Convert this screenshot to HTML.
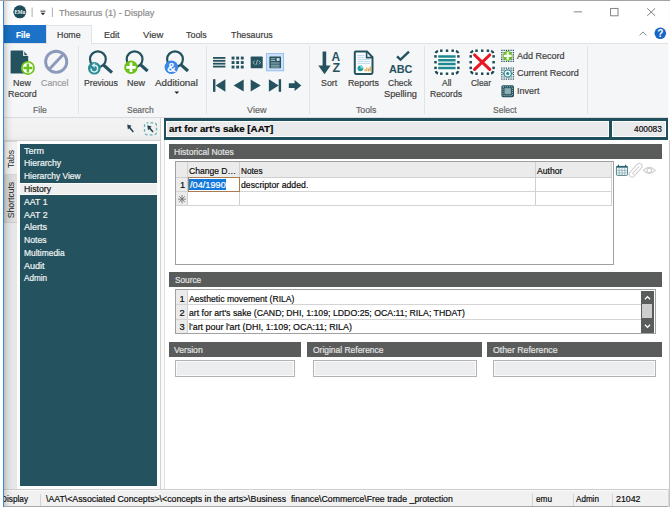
<!DOCTYPE html>
<html><head><meta charset="utf-8"><title>Thesaurus (1) - Display</title>
<style>
html,body{margin:0;padding:0;}
body{width:670px;height:507px;overflow:hidden;background:#fff;position:relative;font-family:"Liberation Sans",sans-serif;}
.t{position:absolute;white-space:pre;transform-origin:0 50%;-webkit-text-stroke:0.2px currentColor;}
.b{position:absolute;box-sizing:border-box;}
.v{position:absolute;white-space:pre;}
svg{position:absolute;overflow:visible;}
</style></head><body>
<!-- window frame -->
<div class="b" style="left:0;top:0;width:670px;height:1px;background:#a3a3a3"></div>
<!-- ribbon body -->
<div class="b" style="left:4px;top:43px;width:665px;height:75px;background:#f5f6f7;border-top:1px solid #e1e2e3"></div>
<div class="b" style="left:4px;top:117px;width:665px;height:1px;background:#dadbdc"></div>
<!-- File tab -->
<div class="b" style="left:4px;top:25px;width:41.5px;height:18px;background:#1b72c6"></div>
<!-- Home tab -->
<div class="b" style="left:45.5px;top:25px;width:46.5px;height:19px;background:#f5f6f7;border:1px solid #e1e2e3;border-bottom:none"></div>
<!-- ribbon separators -->
<div class="b" style="left:77.5px;top:46px;width:1px;height:68px;background:#e2e3e4"></div>
<div class="b" style="left:205.5px;top:46px;width:1px;height:68px;background:#e2e3e4"></div>
<div class="b" style="left:309px;top:46px;width:1px;height:68px;background:#e2e3e4"></div>
<div class="b" style="left:424.3px;top:46px;width:1px;height:68px;background:#e2e3e4"></div>
<div class="b" style="left:587.3px;top:46px;width:1px;height:68px;background:#e2e3e4"></div>

<!-- toolbar / summary band -->
<div class="b" style="left:4px;top:118px;width:156px;height:22px;background:linear-gradient(#f3f3f3,#f0f0f0 80%,#e9e9e9)"></div>
<div class="b" style="left:4px;top:140px;width:156px;height:1px;background:#d0d0d0"></div>
<div class="b" style="left:160px;top:118px;width:1.4px;height:372px;background:#d2d2d2"></div>
<div class="b" style="left:161.4px;top:118px;width:2.6px;height:372px;background:#fbfbfb"></div>
<div class="b" style="left:163.5px;top:140px;width:0.6px;height:350px;background:#e2e2e2"></div>
<!-- teal band -->
<div class="b" style="left:164px;top:118.3px;width:504px;height:21.4px;background:#1f4f5c"></div>
<div class="b" style="left:165.6px;top:121.2px;width:443.4px;height:15.8px;background:#e9eaeb;border:1.4px solid #fff"></div>
<div class="b" style="left:611.8px;top:121.2px;width:53.8px;height:15.8px;background:#e9eaeb;border:1.4px solid #fff"></div>

<!-- left tab strip -->
<div class="b" style="left:4px;top:141px;width:13px;height:348px;background:#e6e7e8"></div>
<div class="b" style="left:4px;top:141px;width:13px;height:34px;background:#f1f1f1;border:1px solid #d6d6d6;border-right:none"></div>
<div class="b" style="left:4px;top:175px;width:13px;height:47.5px;background:linear-gradient(90deg,#d6d6d6,#e0e0e0);border:1px solid #cdcdcd;border-right:none;border-top:none"></div>
<div class="b" style="left:17px;top:141px;width:143px;height:348px;background:#fdfdfd"></div>
<!-- teal nav -->
<div class="b" style="left:20px;top:143.8px;width:137.2px;height:342.2px;background:#25525f"></div>
<div class="b" style="left:20px;top:183px;width:137.2px;height:12px;background:#eeeeee;border-top:1px solid #fbfbfb;border-bottom:1px solid #fbfbfb"></div>

<!-- section headers -->
<div class="b" style="left:169px;top:144px;width:493px;height:14.8px;background:#5a5c5b"></div>
<div class="b" style="left:169px;top:272px;width:493px;height:14.7px;background:#5a5c5b"></div>
<div class="b" style="left:169px;top:342px;width:131.7px;height:14.6px;background:#5a5c5b"></div>
<div class="b" style="left:306.6px;top:342px;width:175.3px;height:14.6px;background:#5a5c5b"></div>
<div class="b" style="left:486.8px;top:342px;width:175.2px;height:14.6px;background:#5a5c5b"></div>

<!-- Historical Notes grid -->
<div class="b" style="left:175px;top:161.4px;width:438.8px;height:103.2px;background:#fff;border:1px solid #a0a0a0"></div>
<div class="b" style="left:176px;top:162.4px;width:436px;height:14.6px;background:#ebebeb"></div>
<div class="b" style="left:176px;top:162.4px;width:11.4px;height:43px;background:#ebebeb"></div>
<div class="b" style="left:176px;top:176.8px;width:436px;height:1px;background:#cfcfcf"></div>
<div class="b" style="left:176px;top:191.1px;width:436px;height:1px;background:#d4d4d4"></div>
<div class="b" style="left:176px;top:205px;width:436px;height:1px;background:#d4d4d4"></div>
<div class="b" style="left:187.3px;top:162.4px;width:1px;height:43px;background:#d0d0d0"></div>
<div class="b" style="left:239.2px;top:162.4px;width:1px;height:43px;background:#d0d0d0"></div>
<div class="b" style="left:535px;top:162.4px;width:1px;height:43px;background:#d0d0d0"></div>
<div class="b" style="left:611.4px;top:162.4px;width:1px;height:43px;background:#d0d0d0"></div>
<!-- editing cell -->
<div class="b" style="left:187.6px;top:177.2px;width:52px;height:14.4px;background:#fff;border:1px solid #a87c52"></div>
<div class="b" style="left:189.2px;top:178.8px;width:37px;height:11px;background:#1279dc"></div>
<!-- star -->
<svg style="left:177.8px;top:194.8px" width="8" height="8.3" viewBox="0 0 7 7.4"><g stroke="#6a6a6a" stroke-width="0.75" fill="none"><path d="M3.5 0V7.4M0 3.7H7M1 1.1L6 6.3M6 1.1L1 6.3"/></g></svg>

<!-- Source grid -->
<div class="b" style="left:175px;top:289.4px;width:480.6px;height:45px;background:#fff;border:1px solid #a0a0a0"></div>
<div class="b" style="left:176px;top:290.4px;width:11.4px;height:43px;background:#ebebeb"></div>
<div class="b" style="left:187.3px;top:290.4px;width:1px;height:43px;background:#d0d0d0"></div>
<div class="b" style="left:176px;top:304.4px;width:464.5px;height:1px;background:#d4d4d4"></div>
<div class="b" style="left:176px;top:318.8px;width:464.5px;height:1px;background:#d4d4d4"></div>
<!-- scrollbar -->
<div class="b" style="left:640.6px;top:291px;width:13px;height:41.8px;background:#5a5c5b"></div>
<div class="b" style="left:642.2px;top:304px;width:9.9px;height:13.8px;background:#cdcdcd"></div>
<svg style="left:640.6px;top:291px" width="13" height="42" viewBox="0 0 13 42"><g stroke="#fff" stroke-width="1.3" fill="none"><path d="M4 8.2L6.5 5.6L9 8.2"/><path d="M4 33.8L6.5 36.4L9 33.8"/></g></svg>

<!-- fields -->
<div class="b" style="left:175px;top:359.6px;width:120.2px;height:17px;background:#ecedee;border:1px solid #b2b2b2;box-shadow:inset 0 0 0 1px #fbfbfb"></div>
<div class="b" style="left:312.6px;top:359.6px;width:164.6px;height:17px;background:#ecedee;border:1px solid #b2b2b2;box-shadow:inset 0 0 0 1px #fbfbfb"></div>
<div class="b" style="left:493px;top:359.6px;width:162.6px;height:17px;background:#ecedee;border:1px solid #b2b2b2;box-shadow:inset 0 0 0 1px #fbfbfb"></div>

<!-- status bar -->
<div class="b" style="left:4px;top:489px;width:665px;height:17px;background:#f1f1f1;border-top:1px solid #cdcdcd;box-shadow:inset 0 1px 0 #fafafa"></div>
<div class="b" style="left:4px;top:506px;width:666px;height:1px;background:#a8a8a8"></div>
<div class="b" style="left:39.6px;top:493.5px;width:1px;height:12px;background:#d2d2d2"></div>
<div class="b" style="left:532.3px;top:493.5px;width:1px;height:12px;background:#d2d2d2"></div>
<div class="b" style="left:572.6px;top:493.5px;width:1px;height:12px;background:#d2d2d2"></div>
<div class="b" style="left:612.2px;top:493.5px;width:1px;height:12px;background:#d2d2d2"></div>
<!-- right edge -->
<div class="b" style="left:668px;top:1px;width:2px;height:506px;background:#fdfdfd"></div>
<div class="b" style="left:669px;top:140px;width:1px;height:367px;background:#c6c6c6"></div>
<div class="b" style="left:668px;top:489px;width:1px;height:18px;background:#d8d8d8"></div>
<!-- ===== ICONS ===== -->
<svg style="left:0;top:0" width="670" height="507" viewBox="0 0 670 507">
<!-- logo -->
<circle cx="19.8" cy="11.8" r="6.5" fill="#1e4c58"/>
<text x="19.8" y="14.2" font-family="Liberation Serif" font-weight="bold" font-size="7" fill="#fff" text-anchor="middle" textLength="10.8" lengthAdjust="spacingAndGlyphs">EMu</text>
<!-- QAT -->
<rect x="31.7" y="7.6" width="0.8" height="9.4" fill="#9a9a9a"/>
<rect x="51.9" y="7.6" width="0.8" height="9.4" fill="#9a9a9a"/>
<rect x="40.4" y="10.7" width="5" height="0.9" fill="#2a2a2a"/>
<path d="M40.6 12.7h4.6l-2.3 2.6z" fill="#2a2a2a"/>
<!-- window controls -->
<rect x="573.8" y="11.4" width="8.2" height="0.9" fill="#777"/>
<rect x="610.6" y="8.4" width="7.4" height="7.4" fill="none" stroke="#777" stroke-width="0.9"/>
<path d="M647.2 8.3l8 7.6M655.2 8.3l-8 7.6" stroke="#777" stroke-width="0.9" fill="none"/>
<path d="M639.6 35.4l3.4-3.5l3.4 3.5" stroke="#888" stroke-width="1" fill="none"/>
<circle cx="660.3" cy="33.3" r="5.8" fill="#1767c8"/>
<text x="660.4" y="36.9" font-family="Liberation Sans" font-weight="bold" font-size="10" fill="#fff" text-anchor="middle">?</text>

<!-- New Record -->
<path d="M11.7 50.4H23.4L28.2 55.8V72.4Q28.2 73.6 27 73.6H11.7Q10.6 73.6 10.6 72.4V51.5Q10.6 50.4 11.7 50.4Z" fill="#25525f"/>
<path d="M23.2 50.2V56H28.4V55.4L23.8 50.2Z" fill="#fff"/>
<path d="M24.3 51.6L27.5 55.2H24.3Z" fill="#25525f"/>
<circle cx="27.9" cy="67.9" r="7" fill="#6cc21b"/>
<circle cx="27.9" cy="67.9" r="5.3" fill="#fff"/>
<path d="M27.9 63.4V72.4M23.4 67.9H32.4" stroke="#6cc21b" stroke-width="2.5"/>
<!-- Cancel -->
<circle cx="56.2" cy="61.8" r="10.6" fill="none" stroke="#8b99bb" stroke-width="2.9"/>
<path d="M49 69.4L63.4 54.2" stroke="#8b99bb" stroke-width="2.9"/>

<!-- Previous -->
<circle cx="97.9" cy="59.2" r="7.9" fill="none" stroke="#25525f" stroke-width="2.2"/>
<path d="M103.8 65.2L112 72.6" stroke="#25525f" stroke-width="3.2"/>
<circle cx="94.3" cy="68.2" r="6.3" fill="#2c8d96"/>
<path d="M91 68.6a3.3 3.3 0 1 0 3.3-3.3" stroke="#d8eef0" stroke-width="1.5" fill="none"/>
<path d="M94.8 62.8L91.6 65.4L94.8 67.8Z" fill="#d8eef0"/>
<!-- New search -->
<circle cx="134.6" cy="59.2" r="7.9" fill="none" stroke="#25525f" stroke-width="2.2"/>
<path d="M140.4 64.6L147.6 71" stroke="#25525f" stroke-width="3.2"/>
<circle cx="131" cy="67.3" r="6.8" fill="#6cc21b"/>
<path d="M131 62.6V72M126.3 67.3H135.7" stroke="#fff" stroke-width="2.7"/>
<!-- Additional -->
<circle cx="175" cy="59.2" r="7.9" fill="none" stroke="#25525f" stroke-width="2.2"/>
<path d="M180.8 64.6L188 71" stroke="#25525f" stroke-width="3.2"/>
<circle cx="171.4" cy="67.3" r="6.8" fill="#3d86e6"/>
<text x="171.5" y="71.6" font-family="Liberation Sans" font-weight="bold" font-size="12.4" fill="#fff" text-anchor="middle">&amp;</text>
<path d="M174.4 91.6h4.8l-2.4 2.5z" fill="#222"/>

<!-- View icons row 1 -->
<g fill="#25525f">
<rect x="213" y="57" width="12.4" height="1.8"/><rect x="213" y="59.9" width="12.4" height="1.8"/><rect x="213" y="62.8" width="12.4" height="1.8"/><rect x="213" y="65.7" width="12.4" height="1.8"/>
<rect x="231.6" y="56.6" width="2.9" height="2.9"/><rect x="236.2" y="56.6" width="2.9" height="2.9"/><rect x="240.8" y="56.6" width="2.9" height="2.9"/>
<rect x="231.6" y="61.1" width="2.9" height="2.9"/><rect x="236.2" y="61.1" width="2.9" height="2.9"/><rect x="240.8" y="61.1" width="2.9" height="2.9"/>
<rect x="231.6" y="65.6" width="2.9" height="2.9"/><rect x="236.2" y="65.6" width="2.9" height="2.9"/><rect x="240.8" y="65.6" width="2.9" height="2.9"/>
<rect x="250.7" y="56.6" width="12" height="11.6" rx="0.6"/>
</g>
<path d="M254.8 60.6L252.8 62.5L254.8 64.4M258.7 60.6L260.7 62.5L258.7 64.4M257.6 59.8L255.9 65.2" stroke="#b9d3d8" stroke-width="0.8" fill="none"/>
<rect x="266.4" y="53.6" width="17.2" height="17.2" fill="#cde2fa" stroke="#8fbaf0" stroke-width="0.9"/>
<rect x="269.4" y="56.6" width="11.6" height="11.6" rx="0.6" fill="#25525f"/>
<path d="M270.8 58.8H275.2M270.8 60.6H275.2M270.8 63H279.6M270.8 65.2H279.6M270.8 67H279.6" stroke="#c4dbe0" stroke-width="0.8"/>
<rect x="276.6" y="58.1" width="3" height="2.8" fill="#c4dbe0"/>
<!-- nav row -->
<g fill="#25525f">
<rect x="213" y="79.2" width="2.4" height="12.6"/><path d="M225.4 79.2V91.8L215.6 85.5Z"/>
<path d="M243.7 79.6V91.4L233.6 85.5Z"/>
<path d="M250.7 79.6V91.4L260.8 85.5Z"/>
<path d="M268.9 79.2V91.8L278.7 85.5Z"/><rect x="278.7" y="79.2" width="2.4" height="12.6"/>
<path d="M288.8 83.3H294.6V80.1L301.3 85.6L294.6 91.1V87.9H288.8Z"/>
</g>

<!-- Sort -->
<g fill="#25525f">
<rect x="322.6" y="51.5" width="3.6" height="16"/>
<path d="M318.3 65.6H330.7L324.5 74.2Z"/>
</g>
<text x="335.9" y="60.7" font-family="Liberation Sans" font-weight="bold" font-size="12.8" fill="#25525f" text-anchor="middle" textLength="8.6" lengthAdjust="spacingAndGlyphs">A</text>
<text x="336.2" y="71.7" font-family="Liberation Sans" font-weight="bold" font-size="12" fill="#25525f" text-anchor="middle" textLength="7.6" lengthAdjust="spacingAndGlyphs">Z</text>
<!-- Reports -->
<path d="M356 51.4H367L372.5 57.2V72.6Q372.5 73.9 371.2 73.9H356Q354.8 73.9 354.8 72.6V52.6Q354.8 51.4 356 51.4Z" fill="#fbfdfe" stroke="#25525f" stroke-width="2"/>
<path d="M366.6 51.6V57.6H372.4" fill="none" stroke="#25525f" stroke-width="1.6"/>
<path d="M357.4 55.4H364.6M357.4 57.4H364.6M357.4 59.4H370M357.4 61.4H370M357.4 63.4H370" stroke="#bcd9ee" stroke-width="1"/>
<circle cx="360.4" cy="68.3" r="2.9" fill="#21a0a0"/>
<path d="M360.4 68.3V65.4A2.9 2.9 0 0 1 363.3 68.3Z" fill="#8fd6d6"/>
<path d="M365 71.2V69M366.8 71.2V67.4M368.6 71.2V68.4M370.2 71.2V66.4" stroke="#e6a23a" stroke-width="1.2"/>
<!-- Check spelling -->
<path d="M397 56.4L400.5 59.7L409 51.6" stroke="#25525f" stroke-width="2.4" fill="none"/>
<text x="400.7" y="72.9" font-family="Liberation Sans" font-weight="bold" font-size="11.4" fill="#25525f" text-anchor="middle" textLength="23.6" lengthAdjust="spacingAndGlyphs">ABC</text>

<!-- All Records -->
<rect x="433.9" y="49.1" width="26.4" height="26.2" rx="4.4" fill="#fdfefe"/>
<g fill="#1f4c58">
<rect x="440.05" y="49.45" width="2.5" height="2.5"/>
<rect x="440.05" y="72.45" width="2.5" height="2.5"/>
<rect x="434.25" y="55.15" width="2.5" height="2.5"/>
<rect x="457.15" y="55.15" width="2.5" height="2.5"/>
<rect x="445.75" y="49.45" width="2.5" height="2.5"/>
<rect x="445.75" y="72.45" width="2.5" height="2.5"/>
<rect x="434.25" y="60.95" width="2.5" height="2.5"/>
<rect x="457.15" y="60.95" width="2.5" height="2.5"/>
<rect x="451.45" y="49.45" width="2.5" height="2.5"/>
<rect x="451.45" y="72.45" width="2.5" height="2.5"/>
<rect x="434.25" y="66.65" width="2.5" height="2.5"/>
<rect x="457.15" y="66.65" width="2.5" height="2.5"/>
</g>
<path d="M435.68 53.19A3.6 3.6 0 0 1 437.99 50.88 M455.91 50.88A3.6 3.6 0 0 1 458.22 53.19 M458.22 71.21A3.6 3.6 0 0 1 455.91 73.52 M437.99 73.52A3.6 3.6 0 0 1 435.68 71.21" fill="none" stroke="#1f4c58" stroke-width="2.5"/>
<path d="M438.2 56.4H455.6M438.2 60.2H455.6M438.2 64H455.6M438.2 67.9H455.6" stroke="#1d8790" stroke-width="2.5"/>
<!-- Clear -->
<rect x="469.1" y="49.1" width="26.4" height="26.2" rx="4.4" fill="#fdfefe"/>
<g fill="#1f4c58">
<rect x="475.25" y="49.45" width="2.5" height="2.5"/>
<rect x="475.25" y="72.45" width="2.5" height="2.5"/>
<rect x="469.45" y="55.15" width="2.5" height="2.5"/>
<rect x="492.35" y="55.15" width="2.5" height="2.5"/>
<rect x="480.95" y="49.45" width="2.5" height="2.5"/>
<rect x="480.95" y="72.45" width="2.5" height="2.5"/>
<rect x="469.45" y="60.95" width="2.5" height="2.5"/>
<rect x="492.35" y="60.95" width="2.5" height="2.5"/>
<rect x="486.65" y="49.45" width="2.5" height="2.5"/>
<rect x="486.65" y="72.45" width="2.5" height="2.5"/>
<rect x="469.45" y="66.65" width="2.5" height="2.5"/>
<rect x="492.35" y="66.65" width="2.5" height="2.5"/>
</g>
<path d="M470.88 53.19A3.6 3.6 0 0 1 473.19 50.88 M491.11 50.88A3.6 3.6 0 0 1 493.42 53.19 M493.42 71.21A3.6 3.6 0 0 1 491.11 73.52 M473.19 73.52A3.6 3.6 0 0 1 470.88 71.21" fill="none" stroke="#1f4c58" stroke-width="2.5"/>
<path d="M474.6 55L489.7 69.4M489.7 55L474.6 69.4" stroke="#e81822" stroke-width="3.1" stroke-linecap="round"/>
<!-- Add Record -->
<path d="M501.20 49.80h1.3v1.3h-1.3zM503.50 49.80h1.3v1.3h-1.3zM505.80 49.80h1.3v1.3h-1.3zM508.10 49.80h1.3v1.3h-1.3zM510.40 49.80h1.3v1.3h-1.3zM512.70 49.80h1.3v1.3h-1.3zM501.20 52.00h1.3v1.3h-1.3zM503.50 52.00h1.3v1.3h-1.3zM505.80 52.00h1.3v1.3h-1.3zM508.10 52.00h1.3v1.3h-1.3zM510.40 52.00h1.3v1.3h-1.3zM512.70 52.00h1.3v1.3h-1.3zM501.20 54.20h1.3v1.3h-1.3zM503.50 54.20h1.3v1.3h-1.3zM510.40 54.20h1.3v1.3h-1.3zM512.70 54.20h1.3v1.3h-1.3zM501.20 56.40h1.3v1.3h-1.3zM503.50 56.40h1.3v1.3h-1.3zM510.40 56.40h1.3v1.3h-1.3zM512.70 56.40h1.3v1.3h-1.3zM501.20 58.60h1.3v1.3h-1.3zM503.50 58.60h1.3v1.3h-1.3zM505.80 58.60h1.3v1.3h-1.3zM508.10 58.60h1.3v1.3h-1.3zM510.40 58.60h1.3v1.3h-1.3zM512.70 58.60h1.3v1.3h-1.3zM501.20 60.80h1.3v1.3h-1.3zM503.50 60.80h1.3v1.3h-1.3zM505.80 60.80h1.3v1.3h-1.3zM508.10 60.80h1.3v1.3h-1.3zM510.40 60.80h1.3v1.3h-1.3zM512.70 60.80h1.3v1.3h-1.3z" fill="#2a5560"/>
<circle cx="507.7" cy="55.9" r="4.8" fill="#6cc21b"/>
<path d="M507.7 52V59.8M503.8 55.9H511.6" stroke="#fff" stroke-width="2.1"/>
<!-- Current Record -->
<path d="M501.20 67.40h1.3v1.3h-1.3zM503.50 67.40h1.3v1.3h-1.3zM505.80 67.40h1.3v1.3h-1.3zM508.10 67.40h1.3v1.3h-1.3zM510.40 67.40h1.3v1.3h-1.3zM512.70 67.40h1.3v1.3h-1.3zM501.20 69.60h1.3v1.3h-1.3zM503.50 69.60h1.3v1.3h-1.3zM505.80 69.60h1.3v1.3h-1.3zM508.10 69.60h1.3v1.3h-1.3zM510.40 69.60h1.3v1.3h-1.3zM512.70 69.60h1.3v1.3h-1.3zM501.20 71.80h1.3v1.3h-1.3zM503.50 71.80h1.3v1.3h-1.3zM510.40 71.80h1.3v1.3h-1.3zM512.70 71.80h1.3v1.3h-1.3zM501.20 74.00h1.3v1.3h-1.3zM503.50 74.00h1.3v1.3h-1.3zM510.40 74.00h1.3v1.3h-1.3zM512.70 74.00h1.3v1.3h-1.3zM501.20 76.20h1.3v1.3h-1.3zM503.50 76.20h1.3v1.3h-1.3zM505.80 76.20h1.3v1.3h-1.3zM508.10 76.20h1.3v1.3h-1.3zM510.40 76.20h1.3v1.3h-1.3zM512.70 76.20h1.3v1.3h-1.3zM501.20 78.40h1.3v1.3h-1.3zM503.50 78.40h1.3v1.3h-1.3zM505.80 78.40h1.3v1.3h-1.3zM508.10 78.40h1.3v1.3h-1.3zM510.40 78.40h1.3v1.3h-1.3zM512.70 78.40h1.3v1.3h-1.3z" fill="#2a5560"/><circle cx="507.7" cy="73.5" r="4.6" fill="#f5f6f7"/><path d="M502.6 73.5H512.8" stroke="#2c8d96" stroke-width="0.9"/>
<circle cx="507.7" cy="73.5" r="3.7" fill="#f5f6f7" stroke="#2c8d96" stroke-width="1.3"/>
<circle cx="507.7" cy="73.5" r="1.6" fill="#2c8d96"/>
<!-- Invert -->
<rect x="501.4" y="85.2" width="12.6" height="12" rx="1.6" fill="#25525f"/>
<rect x="504.5" y="88.2" width="6.4" height="6" fill="#8fadb3"/>
<rect x="503" y="86.8" width="9.4" height="8.8" fill="none" stroke="#a9c3c8" stroke-width="1" stroke-dasharray="1 1.1"/>

<!-- toolbar icons -->
<path d="M127.2 124.6L131.6 125.8L130.3 127.1L133.9 131.4L132.9 132.5L129.1 128.3L127.9 129.6Z" fill="#1f4552"/>
<rect x="144.5" y="122.8" width="12" height="12" rx="2.4" fill="none" stroke="#62b1b7" stroke-width="1.25" stroke-dasharray="2.7 2.1" stroke-dashoffset="1.2"/>
<path d="M147.3 125.2L151.7 126.4L150.4 127.7L153.6 131.4L152.6 132.5L149.2 128.9L148 130.2Z" fill="#1f4552"/>

<!-- grid side icons -->
<rect x="616.4" y="166.4" width="11.2" height="9" rx="1" fill="#f4f8f9" stroke="#2a6370" stroke-width="0.8"/>
<rect x="616.4" y="166" width="11.2" height="1.7" fill="#2a6370"/>
<path d="M618.4 164.8V167M625.6 164.8V167" stroke="#2a6370" stroke-width="1.2"/>
<path d="M619.2 168V175.4M622 168V175.4M624.8 168V175.4M616.4 170.4H627.6M616.4 172.9H627.6" stroke="#6f9aa3" stroke-width="0.6"/>
<g transform="rotate(-48 635.6 170.3)" fill="none" stroke="#cfcfcf" stroke-width="1"><rect x="627.4" y="167.5" width="16.4" height="5.6" rx="2.8"/><path d="M641 170.3H631.4a1.3 1.3 0 0 0 0 1.5"/></g>
<path d="M643.4 170.4Q649.2 164 655.2 170.4Q649.2 176.6 643.4 170.4Z" fill="none" stroke="#cfcfcf" stroke-width="1.1"/>
<circle cx="649.3" cy="170.4" r="2.3" fill="none" stroke="#cfcfcf" stroke-width="1.1"/>
</svg>
<!-- vertical tab labels -->
<span class="v" style="left:10.9px;top:159.4px;font-size:8.9px;line-height:9px;color:#222;transform:translate(-50%,-50%) rotate(-90deg) scaleX(0.97);transform-origin:50% 50%">Tabs</span>
<span class="v" style="left:10.9px;top:199.6px;font-size:8.9px;line-height:9px;color:#222;transform:translate(-50%,-50%) rotate(-90deg) scaleX(0.97);transform-origin:50% 50%">Shortcuts</span>

<span class="t" style="left:59.10px;top:8.00px;font-size:9.9px;line-height:9.9px;color:#8c8c8c;font-weight:normal;transform:scaleX(0.9296);">Thesaurus (1) - Display</span>
<span class="t" style="left:16.30px;top:30.00px;font-size:9.9px;line-height:9.9px;color:#ffffff;font-weight:bold;transform:scaleX(0.8228);">File</span>
<span class="t" style="left:56.80px;top:30.00px;font-size:9.9px;line-height:9.9px;color:#3c3c3c;font-weight:normal;transform:scaleX(0.8958);">Home</span>
<span class="t" style="left:104.00px;top:30.00px;font-size:9.9px;line-height:9.9px;color:#3c3c3c;font-weight:normal;transform:scaleX(0.9101);">Edit</span>
<span class="t" style="left:143.10px;top:30.00px;font-size:9.9px;line-height:9.9px;color:#3c3c3c;font-weight:normal;transform:scaleX(0.9560);">View</span>
<span class="t" style="left:186.10px;top:30.00px;font-size:9.9px;line-height:9.9px;color:#3c3c3c;font-weight:normal;transform:scaleX(0.9019);">Tools</span>
<span class="t" style="left:230.80px;top:30.00px;font-size:9.9px;line-height:9.9px;color:#3c3c3c;font-weight:normal;transform:scaleX(0.8938);">Thesaurus</span>
<span class="t" style="left:13.40px;top:78.00px;font-size:9.6px;line-height:9.6px;color:#3f3f3f;font-weight:normal;transform:scaleX(0.9321);">New</span>
<span class="t" style="left:7.50px;top:89.00px;font-size:9.6px;line-height:9.6px;color:#3f3f3f;font-weight:normal;transform:scaleX(0.9309);">Record</span>
<span class="t" style="left:41.40px;top:78.00px;font-size:9.6px;line-height:9.6px;color:#9b9b9b;font-weight:normal;transform:scaleX(0.9205);">Cancel</span>
<span class="t" style="left:83.50px;top:78.00px;font-size:9.6px;line-height:9.6px;color:#3f3f3f;font-weight:normal;transform:scaleX(0.9055);">Previous</span>
<span class="t" style="left:127.30px;top:78.00px;font-size:9.6px;line-height:9.6px;color:#3f3f3f;font-weight:normal;transform:scaleX(0.9426);">New</span>
<span class="t" style="left:155.20px;top:78.00px;font-size:9.6px;line-height:9.6px;color:#3f3f3f;font-weight:normal;transform:scaleX(1.0180);">Additional</span>
<span class="t" style="left:320.80px;top:78.00px;font-size:9.6px;line-height:9.6px;color:#3f3f3f;font-weight:normal;transform:scaleX(0.9200);">Sort</span>
<span class="t" style="left:348.10px;top:78.00px;font-size:9.6px;line-height:9.6px;color:#3f3f3f;font-weight:normal;transform:scaleX(0.9198);">Reports</span>
<span class="t" style="left:388.20px;top:78.00px;font-size:9.6px;line-height:9.6px;color:#3f3f3f;font-weight:normal;transform:scaleX(0.8859);">Check</span>
<span class="t" style="left:384.00px;top:89.00px;font-size:9.6px;line-height:9.6px;color:#3f3f3f;font-weight:normal;transform:scaleX(0.9666);">Spelling</span>
<span class="t" style="left:442.10px;top:78.00px;font-size:9.6px;line-height:9.6px;color:#3f3f3f;font-weight:normal;transform:scaleX(0.8902);">All</span>
<span class="t" style="left:430.30px;top:89.00px;font-size:9.6px;line-height:9.6px;color:#3f3f3f;font-weight:normal;transform:scaleX(0.8983);">Records</span>
<span class="t" style="left:471.40px;top:78.00px;font-size:9.6px;line-height:9.6px;color:#3f3f3f;font-weight:normal;transform:scaleX(0.8763);">Clear</span>
<span class="t" style="left:516.50px;top:51.00px;font-size:9.6px;line-height:9.6px;color:#3f3f3f;font-weight:normal;transform:scaleX(0.9394);">Add Record</span>
<span class="t" style="left:516.50px;top:68.00px;font-size:9.6px;line-height:9.6px;color:#3f3f3f;font-weight:normal;transform:scaleX(0.9437);">Current Record</span>
<span class="t" style="left:516.50px;top:86.00px;font-size:9.6px;line-height:9.6px;color:#3f3f3f;font-weight:normal;transform:scaleX(0.9375);">Invert</span>
<span class="t" style="left:32.60px;top:105.00px;font-size:9.6px;line-height:9.6px;color:#666;font-weight:normal;transform:scaleX(0.8921);">File</span>
<span class="t" style="left:127.30px;top:105.00px;font-size:9.6px;line-height:9.6px;color:#666;font-weight:normal;transform:scaleX(0.8814);">Search</span>
<span class="t" style="left:246.50px;top:105.00px;font-size:9.6px;line-height:9.6px;color:#666;font-weight:normal;transform:scaleX(0.9455);">View</span>
<span class="t" style="left:355.60px;top:105.00px;font-size:9.6px;line-height:9.6px;color:#666;font-weight:normal;transform:scaleX(0.9105);">Tools</span>
<span class="t" style="left:493.40px;top:105.00px;font-size:9.6px;line-height:9.6px;color:#666;font-weight:normal;transform:scaleX(0.8848);">Select</span>
<span class="t" style="left:168.80px;top:124.00px;font-size:9.4px;line-height:9.4px;color:#050505;font-weight:bold;transform:scaleX(1.0420);">art for art's sake [AAT]</span>
<span class="t" style="left:634.20px;top:125.00px;font-size:8.8px;line-height:8.8px;color:#0c0c0c;font-weight:normal;transform:scaleX(0.9469);">400083</span>
<span class="t" style="left:23.80px;top:147.00px;font-size:9.3px;line-height:9.3px;color:#f2f6f7;font-weight:normal;transform:scaleX(0.9723);">Term</span>
<span class="t" style="left:23.80px;top:159.00px;font-size:9.3px;line-height:9.3px;color:#f2f6f7;font-weight:normal;transform:scaleX(0.9326);">Hierarchy</span>
<span class="t" style="left:23.80px;top:172.00px;font-size:9.3px;line-height:9.3px;color:#f2f6f7;font-weight:normal;transform:scaleX(0.9076);">Hierarchy View</span>
<span class="t" style="left:23.80px;top:185.00px;font-size:9.3px;line-height:9.3px;color:#111;font-weight:normal;transform:scaleX(0.9365);">History</span>
<span class="t" style="left:23.80px;top:198.00px;font-size:9.3px;line-height:9.3px;color:#f2f6f7;font-weight:normal;transform:scaleX(0.9446);">AAT 1</span>
<span class="t" style="left:23.80px;top:211.00px;font-size:9.3px;line-height:9.3px;color:#f2f6f7;font-weight:normal;transform:scaleX(0.9446);">AAT 2</span>
<span class="t" style="left:23.80px;top:223.00px;font-size:9.3px;line-height:9.3px;color:#f2f6f7;font-weight:normal;transform:scaleX(0.9720);">Alerts</span>
<span class="t" style="left:23.80px;top:236.00px;font-size:9.3px;line-height:9.3px;color:#f2f6f7;font-weight:normal;transform:scaleX(0.9302);">Notes</span>
<span class="t" style="left:23.80px;top:249.00px;font-size:9.3px;line-height:9.3px;color:#f2f6f7;font-weight:normal;transform:scaleX(0.9032);">Multimedia</span>
<span class="t" style="left:23.80px;top:262.00px;font-size:9.3px;line-height:9.3px;color:#f2f6f7;font-weight:normal;transform:scaleX(0.9716);">Audit</span>
<span class="t" style="left:23.80px;top:274.00px;font-size:9.3px;line-height:9.3px;color:#f2f6f7;font-weight:normal;transform:scaleX(0.8763);">Admin</span>
<span class="t" style="left:174.30px;top:148.00px;font-size:9.3px;line-height:9.3px;color:#e4e4e4;font-weight:normal;transform:scaleX(0.9169);">Historical Notes</span>
<span class="t" style="left:174.70px;top:276.00px;font-size:9.3px;line-height:9.3px;color:#e4e4e4;font-weight:normal;transform:scaleX(0.8891);">Source</span>
<span class="t" style="left:174.30px;top:346.00px;font-size:9.3px;line-height:9.3px;color:#e4e4e4;font-weight:normal;transform:scaleX(0.9253);">Version</span>
<span class="t" style="left:312.50px;top:346.00px;font-size:9.3px;line-height:9.3px;color:#e4e4e4;font-weight:normal;transform:scaleX(0.9095);">Original Reference</span>
<span class="t" style="left:492.50px;top:346.00px;font-size:9.3px;line-height:9.3px;color:#e4e4e4;font-weight:normal;transform:scaleX(0.9384);">Other Reference</span>
<span class="t" style="left:189.10px;top:167.00px;font-size:9.3px;line-height:9.3px;color:#0c0c0c;font-weight:normal;transform:scaleX(0.9204);">Change D…</span>
<span class="t" style="left:241.20px;top:167.00px;font-size:9.3px;line-height:9.3px;color:#0c0c0c;font-weight:normal;transform:scaleX(0.8849);">Notes</span>
<span class="t" style="left:537.00px;top:167.00px;font-size:9.3px;line-height:9.3px;color:#0c0c0c;font-weight:normal;transform:scaleX(0.9304);">Author</span>
<span class="t" style="left:180.00px;top:181.00px;font-size:9.3px;line-height:9.3px;color:#0c0c0c;font-weight:normal;transform:scaleX(1.0000);">1</span>
<span class="t" style="left:190.00px;top:181.00px;font-size:9.3px;line-height:9.3px;color:#ffffff;font-weight:normal;transform:scaleX(0.9889);">/04/1990</span>
<span class="t" style="left:241.20px;top:181.00px;font-size:9.3px;line-height:9.3px;color:#0c0c0c;font-weight:normal;transform:scaleX(0.9368);">descriptor added.</span>
<span class="t" style="left:179.50px;top:295.00px;font-size:9.3px;line-height:9.3px;color:#0c0c0c;font-weight:normal;transform:scaleX(1.0000);">1</span>
<span class="t" style="left:179.50px;top:309.00px;font-size:9.3px;line-height:9.3px;color:#0c0c0c;font-weight:normal;transform:scaleX(1.0000);">2</span>
<span class="t" style="left:179.50px;top:323.00px;font-size:9.3px;line-height:9.3px;color:#0c0c0c;font-weight:normal;transform:scaleX(1.0000);">3</span>
<span class="t" style="left:189.00px;top:295.00px;font-size:9.3px;line-height:9.3px;color:#0c0c0c;font-weight:normal;transform:scaleX(0.9281);">Aesthetic movement (RILA)</span>
<span class="t" style="left:189.00px;top:309.00px;font-size:9.3px;line-height:9.3px;color:#0c0c0c;font-weight:normal;transform:scaleX(0.9398);">art for art's sake (CAND; DHI, 1:109; LDDO:25; OCA:11; RILA; THDAT)</span>
<span class="t" style="left:189.00px;top:323.00px;font-size:9.3px;line-height:9.3px;color:#0c0c0c;font-weight:normal;transform:scaleX(0.9602);">l'art pour l'art (DHI, 1:109; OCA:11; RILA)</span>
<span class="t" style="left:1.30px;top:495.00px;font-size:9.3px;line-height:9.3px;color:#0c0c0c;font-weight:normal;transform:scaleX(0.8890);">Display</span>
<span class="t" style="left:45.70px;top:495.00px;font-size:9.3px;line-height:9.3px;color:#0c0c0c;font-weight:normal;transform:scaleX(0.9409);">\AAT\&lt;Associated Concepts&gt;\&lt;concepts in the arts&gt;\Business  finance\Commerce\Free trade _protection</span>
<span class="t" style="left:535.50px;top:495.00px;font-size:9.3px;line-height:9.3px;color:#0c0c0c;font-weight:normal;transform:scaleX(0.8843);">emu</span>
<span class="t" style="left:575.60px;top:495.00px;font-size:9.3px;line-height:9.3px;color:#0c0c0c;font-weight:normal;transform:scaleX(0.8688);">Admin</span>
<span class="t" style="left:615.50px;top:495.00px;font-size:9.3px;line-height:9.3px;color:#0c0c0c;font-weight:normal;transform:scaleX(0.9474);">21042</span>
<div class="b" style="left:4px;top:1px;width:9px;height:505px;background:linear-gradient(90deg,rgba(0,0,0,0.17),rgba(0,0,0,0.05) 45%,rgba(0,0,0,0))"></div>
<div class="b" style="left:0;top:1px;width:3px;height:506px;background:#fff"></div>
<div class="b" style="left:3px;top:1px;width:1px;height:506px;background:#3a8ad8"></div>
</body></html>
